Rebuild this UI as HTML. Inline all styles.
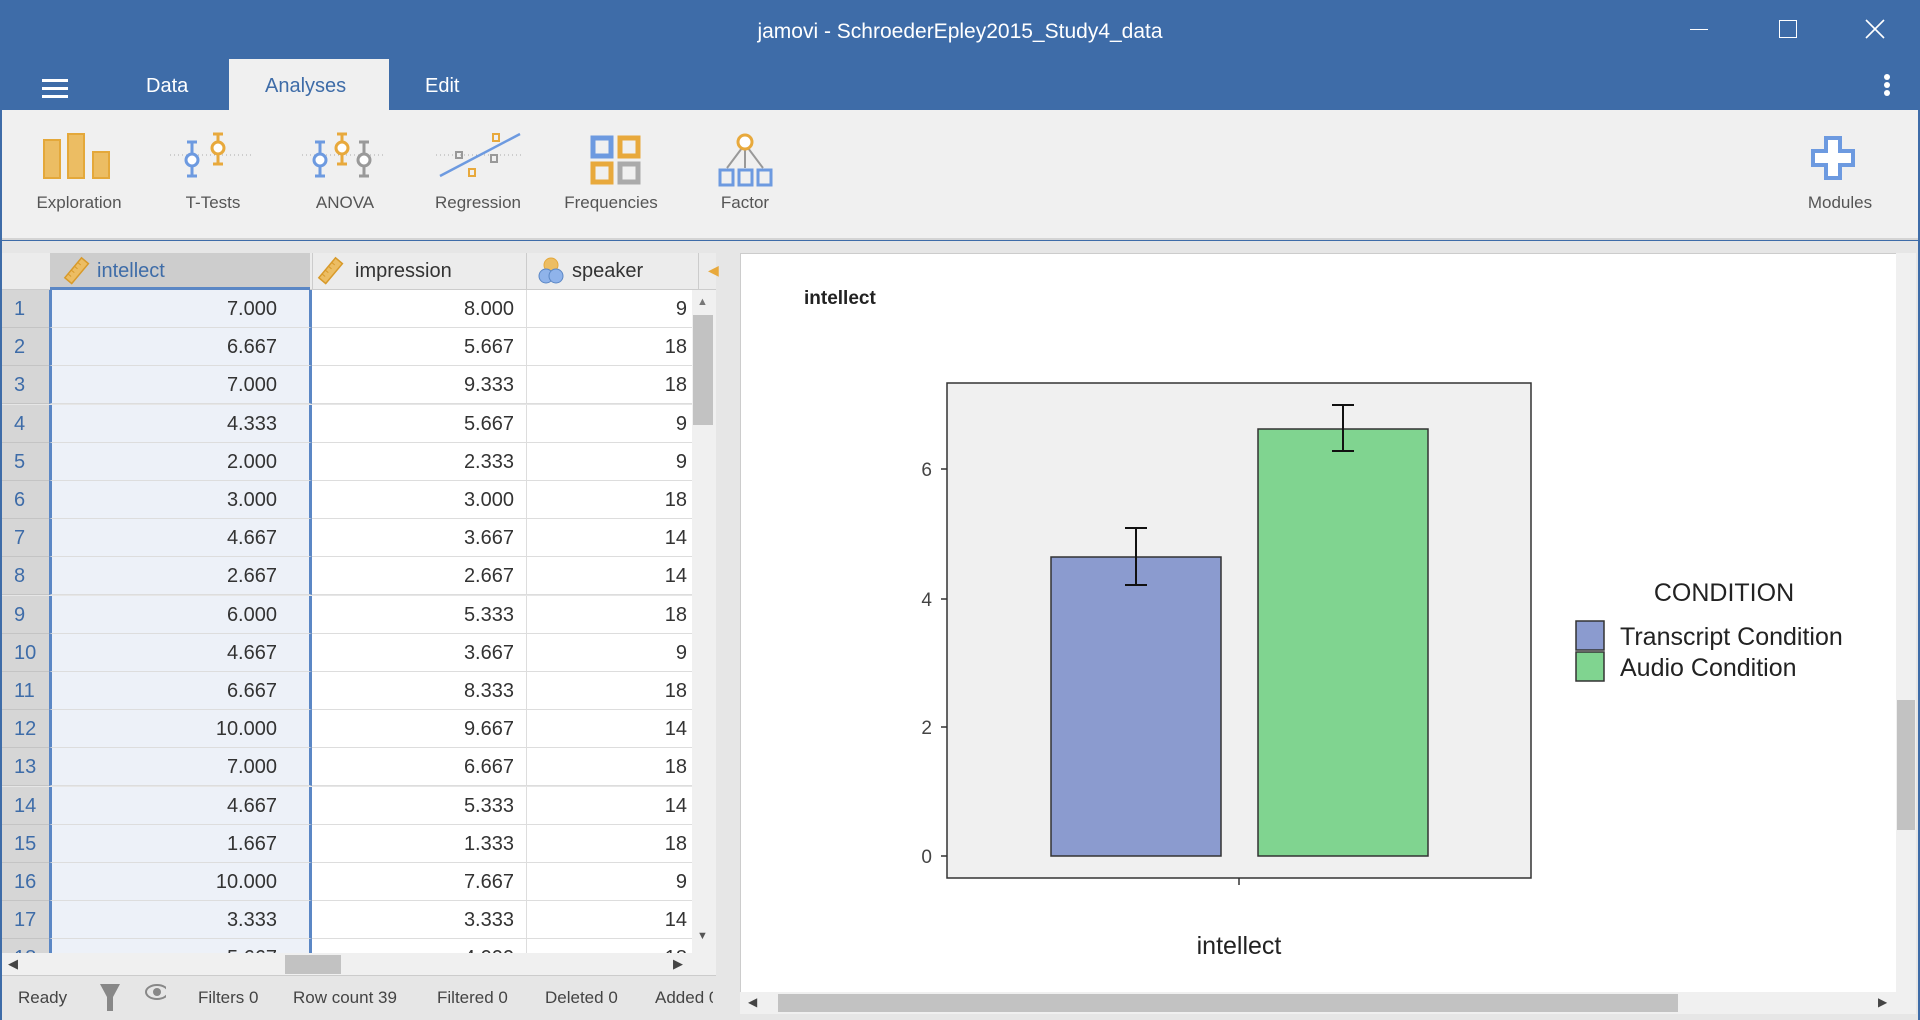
<!DOCTYPE html>
<html><head><meta charset="utf-8"><style>
*{margin:0;padding:0;box-sizing:border-box}
body{width:1920px;height:1020px;overflow:hidden;background:#3e6ca8;font-family:"Liberation Sans",sans-serif;position:relative}
.a{position:absolute}
.t{color:#fff}
.rib{left:2px;top:110px;width:1916px;height:130px;background:#f0f0f0;border-bottom:2px solid #d4d4d4}
.lbl{position:absolute;top:193px;font-size:17px;color:#555;text-align:center;width:140px}
.main{left:2px;top:241px;width:1916px;height:779px;background:#e6e6e6}
.row{position:absolute;left:2px;height:38px;width:690px;font-size:20px;color:#333}
.row div{position:absolute;top:0;height:38px;line-height:38px;border-bottom:1px solid #ddd}
.rn{left:0;width:47px;background:#d6d6d6;color:#3e6ca8;padding-left:12px;border-bottom-color:#c4c4c4!important}
.c1{left:47px;width:263px;background:#edf1f8;text-align:right;padding-right:32px;border-left:3px solid #5b87c5;border-right:3px solid #5b87c5}
.c2{left:310px;width:215px;background:#fff;text-align:right;padding-right:12px;border-right:1px solid #ddd}
.c3{left:525px;width:165px;background:#fff;text-align:right;padding-right:5px}
.st{position:absolute;top:988px;font-size:17px;color:#444}
</style></head><body>
<div class="a t" style="left:0;width:1920px;top:20px;text-align:center;font-size:21px">jamovi - SchroederEpley2015_Study4_data</div>
<div class="a" style="left:1690px;top:29px;width:18px;height:1px;background:#fff"></div>
<div class="a" style="left:1779px;top:20px;width:18px;height:18px;border:1.5px solid #fff"></div>
<svg class="a" style="left:1865px;top:19px" width="20" height="20"><path d="M1 1L19 19M19 1L1 19" stroke="#fff" stroke-width="1.6"/></svg>
<div class="a" style="left:42px;top:79px;width:26px;height:3px;background:#fff;box-shadow:0 8px #fff,0 16px #fff"></div>
<div class="a t" style="left:146px;top:75px;font-size:20px">Data</div>
<div class="a" style="left:229px;top:59px;width:160px;height:52px;background:#f0f0f0"></div>
<div class="a" style="left:265px;top:75px;font-size:20px;color:#3e6ca8">Analyses</div>
<div class="a t" style="left:425px;top:75px;font-size:20px">Edit</div>
<div class="a" style="left:1884px;top:74px;width:6px;height:6px;border-radius:3px;background:#fff;box-shadow:0 8px #fff,0 16px #fff"></div>
<div class="a rib"></div>
<svg class="a" style="left:0;top:110px" width="1920" height="80">
<g fill="#ecbd63" stroke="#e4a83a" stroke-width="2"><rect x="44" y="30" width="16" height="38"/><rect x="68" y="24" width="16" height="44"/><rect x="93" y="42" width="16" height="26"/></g>
<g stroke="#aaa" stroke-dasharray="1 3"><line x1="170" y1="45" x2="252" y2="45"/><line x1="302" y1="45" x2="384" y2="45"/><line x1="436" y1="45" x2="522" y2="45"/></g>
<g fill="none" stroke-width="3"><path d="M192 32v34M187 32h10M187 66h10" stroke="#6d9ae0"/><circle cx="192" cy="50" r="6" fill="#fff" stroke="#6d9ae0"/>
<path d="M218 24v30M213 24h10M213 54h10" stroke="#e8a93c"/><circle cx="218" cy="38" r="6" fill="#fff" stroke="#e8a93c"/>
<path d="M320 32v34M315 32h10M315 66h10" stroke="#6d9ae0"/><circle cx="320" cy="50" r="6" fill="#fff" stroke="#6d9ae0"/>
<path d="M342 24v30M337 24h10M337 54h10" stroke="#e8a93c"/><circle cx="342" cy="38" r="6" fill="#fff" stroke="#e8a93c"/>
<path d="M364 32v34M359 32h10M359 66h10" stroke="#999"/><circle cx="364" cy="50" r="6" fill="#fff" stroke="#999"/>
<line x1="440" y1="66" x2="520" y2="24" stroke="#6d9ae0" stroke-width="2.5"/>
<rect x="456" y="42" width="6" height="6" stroke="#999" stroke-width="2"/><rect x="491" y="45" width="6" height="7" stroke="#999" stroke-width="2"/><rect x="493" y="24" width="6" height="7" stroke="#e8a93c" stroke-width="2"/><rect x="469" y="59" width="6" height="7" stroke="#e8a93c" stroke-width="2"/>
<rect x="593" y="28" width="18" height="18" stroke="#6d9ae0" stroke-width="5"/><rect x="620" y="28" width="18" height="18" stroke="#e8a93c" stroke-width="5"/><rect x="593" y="54" width="18" height="18" stroke="#e8a93c" stroke-width="5"/><rect x="620" y="54" width="18" height="18" stroke="#aaa" stroke-width="5"/>
<path d="M745 34l-18 24M745 34v24M745 34l18 24" stroke="#999" stroke-width="2"/><circle cx="745" cy="32" r="7" fill="#fff" stroke="#e8a93c"/>
<g stroke="#6d9ae0"><rect x="720" y="60" width="13" height="15"/><rect x="739" y="60" width="13" height="15"/><rect x="758" y="60" width="13" height="15"/></g>
<path d="M1826 28h14v13h13v14h-13v13h-14v-13h-13v-14h13z" fill="#fff" stroke="#6d9ae0" stroke-width="4"/></g>
</svg>
<div class="lbl" style="left:9px">Exploration</div><div class="lbl" style="left:143px">T-Tests</div><div class="lbl" style="left:275px">ANOVA</div><div class="lbl" style="left:408px">Regression</div><div class="lbl" style="left:541px">Frequencies</div><div class="lbl" style="left:675px">Factor</div><div class="lbl" style="left:1770px">Modules</div>
<div class="a main"></div>
<div class="a" style="left:2px;top:253px;width:714px;height:37px;background:#ececec;border-bottom:1px solid #ccc"></div>
<div class="a" style="left:50px;top:253px;width:260px;height:37px;background:#cdcdcd;border-bottom:3px solid #5b87c5"></div>
<svg class="a" style="left:62px;top:256px" width="30" height="30"><g transform="rotate(-50 15 15)"><rect x="2" y="10" width="26" height="9" fill="#ecbd63" stroke="#d89a2a" stroke-width="1.5"/><path d="M7 10v4M12 10v4M17 10v4M22 10v4" stroke="#d89a2a"/></g></svg>
<div class="a" style="left:97px;top:260px;font-size:20px;color:#3e6ca8">intellect</div>
<svg class="a" style="left:316px;top:256px" width="30" height="30"><g transform="rotate(-50 15 15)"><rect x="2" y="10" width="26" height="9" fill="#ecbd63" stroke="#d89a2a" stroke-width="1.5"/><path d="M7 10v4M12 10v4M17 10v4M22 10v4" stroke="#d89a2a"/></g></svg>
<div class="a" style="left:355px;top:260px;font-size:20px;color:#333">impression</div>
<div class="a" style="left:312px;top:253px;width:1px;height:37px;background:#ccc"></div><div class="a" style="left:526px;top:253px;width:1px;height:37px;background:#ccc"></div><div class="a" style="left:698px;top:253px;width:1px;height:37px;background:#ccc"></div>
<svg class="a" style="left:537px;top:256px" width="28" height="30"><circle cx="14" cy="9" r="7" fill="#ecbd63" stroke="#e4a83a"/><circle cx="9" cy="20" r="7" fill="#8fb3ea" stroke="#5b87c5"/><circle cx="19" cy="20" r="7" fill="#8fb3ea" stroke="#5b87c5"/></svg>
<div class="a" style="left:572px;top:260px;font-size:20px;color:#333">speaker</div>
<div class="a" style="left:708px;top:262px;font-size:14px;color:#e8a93c">◀</div>
<div class="a" style="left:0;top:290px;width:716px;height:663px;overflow:hidden">
<div class="row" style="top:0"><div class="rn">1</div><div class="c1">7.000</div><div class="c2">8.000</div><div class="c3">9</div></div>
<div class="row" style="top:38px"><div class="rn">2</div><div class="c1">6.667</div><div class="c2">5.667</div><div class="c3">18</div></div>
<div class="row" style="top:76px"><div class="rn">3</div><div class="c1">7.000</div><div class="c2">9.333</div><div class="c3">18</div></div>
<div class="row" style="top:115px"><div class="rn">4</div><div class="c1">4.333</div><div class="c2">5.667</div><div class="c3">9</div></div>
<div class="row" style="top:153px"><div class="rn">5</div><div class="c1">2.000</div><div class="c2">2.333</div><div class="c3">9</div></div>
<div class="row" style="top:191px"><div class="rn">6</div><div class="c1">3.000</div><div class="c2">3.000</div><div class="c3">18</div></div>
<div class="row" style="top:229px"><div class="rn">7</div><div class="c1">4.667</div><div class="c2">3.667</div><div class="c3">14</div></div>
<div class="row" style="top:267px"><div class="rn">8</div><div class="c1">2.667</div><div class="c2">2.667</div><div class="c3">14</div></div>
<div class="row" style="top:306px"><div class="rn">9</div><div class="c1">6.000</div><div class="c2">5.333</div><div class="c3">18</div></div>
<div class="row" style="top:344px"><div class="rn">10</div><div class="c1">4.667</div><div class="c2">3.667</div><div class="c3">9</div></div>
<div class="row" style="top:382px"><div class="rn">11</div><div class="c1">6.667</div><div class="c2">8.333</div><div class="c3">18</div></div>
<div class="row" style="top:420px"><div class="rn">12</div><div class="c1">10.000</div><div class="c2">9.667</div><div class="c3">14</div></div>
<div class="row" style="top:458px"><div class="rn">13</div><div class="c1">7.000</div><div class="c2">6.667</div><div class="c3">18</div></div>
<div class="row" style="top:497px"><div class="rn">14</div><div class="c1">4.667</div><div class="c2">5.333</div><div class="c3">14</div></div>
<div class="row" style="top:535px"><div class="rn">15</div><div class="c1">1.667</div><div class="c2">1.333</div><div class="c3">18</div></div>
<div class="row" style="top:573px"><div class="rn">16</div><div class="c1">10.000</div><div class="c2">7.667</div><div class="c3">9</div></div>
<div class="row" style="top:611px"><div class="rn">17</div><div class="c1">3.333</div><div class="c2">3.333</div><div class="c3">14</div></div>
<div class="row" style="top:649px"><div class="rn">18</div><div class="c1">5.667</div><div class="c2">4.000</div><div class="c3">18</div></div>
<div class="a" style="left:692px;top:0;width:24px;height:663px;background:#f0f0f0"></div>
<div class="a" style="left:693px;top:25px;width:20px;height:110px;background:#c2c2c2"></div>
<div class="a" style="left:697px;top:6px;font-size:11px;color:#777">▲</div><div class="a" style="left:697px;top:640px;font-size:11px;color:#555">▼</div>
</div>
<div class="a" style="left:2px;top:953px;width:714px;height:23px;background:#f0f0f0;border-bottom:1px solid #ccc"></div>
<div class="a" style="left:285px;top:955px;width:56px;height:19px;background:#c2c2c2"></div>
<div class="a" style="left:8px;top:956px;font-size:13px;color:#444">◀</div><div class="a" style="left:673px;top:956px;font-size:13px;color:#444">▶</div>
<div class="st" style="left:18px">Ready</div>
<svg class="a" style="left:98px;top:982px" width="68" height="30"><path d="M2 2h20l-7 13v14h-6v-14z" fill="#888"/><ellipse cx="59" cy="10" rx="11" ry="7" fill="none" stroke="#888" stroke-width="2"/><circle cx="59" cy="10" r="4" fill="#888"/></svg>
<div class="st" style="left:198px">Filters 0</div><div class="st" style="left:293px">Row count 39</div><div class="st" style="left:437px">Filtered 0</div><div class="st" style="left:545px">Deleted 0</div><div class="st" style="left:655px;width:58px;overflow:hidden;white-space:nowrap">Added 0</div>
<div class="a" style="left:740px;top:253px;width:1156px;height:739px;background:#fff;border-left:1px solid #ccc;border-top:1px solid #ccc"></div>
<div class="a" style="left:1896px;top:253px;width:20px;height:739px;background:#f0f0f0"></div>
<div class="a" style="left:1897px;top:700px;width:18px;height:130px;background:#c2c2c2"></div>
<div class="a" style="left:740px;top:992px;width:1176px;height:22px;background:#f0f0f0"></div>
<div class="a" style="left:778px;top:994px;width:900px;height:18px;background:#c2c2c2"></div>
<div class="a" style="left:748px;top:995px;font-size:12px;color:#444">◀</div><div class="a" style="left:1878px;top:995px;font-size:12px;color:#444">▶</div>
<div class="a" style="left:804px;top:288px;font-size:19px;font-weight:bold;color:#222">intellect</div>
<svg class="a" style="left:0;top:0" width="1920" height="1020" font-family="Liberation Sans,sans-serif">
<rect x="947" y="383" width="584" height="495" fill="#f0f0f0" stroke="#333" stroke-width="1.5"/>
<g stroke="#333" stroke-width="1.5"><line x1="941" y1="469" x2="947" y2="469"/><line x1="941" y1="599" x2="947" y2="599"/><line x1="941" y1="727" x2="947" y2="727"/><line x1="941" y1="856" x2="947" y2="856"/><line x1="1239" y1="878" x2="1239" y2="885"/></g>
<g font-size="19" fill="#444" text-anchor="end"><text x="932" y="476">6</text><text x="932" y="606">4</text><text x="932" y="734">2</text><text x="932" y="863">0</text></g>
<rect x="1051" y="557" width="170" height="299" fill="#8b9bcf" stroke="#333" stroke-width="1.5"/>
<rect x="1258" y="429" width="170" height="427" fill="#80d490" stroke="#333" stroke-width="1.5"/>
<g stroke="#111" stroke-width="2"><path d="M1136 528v57M1125 528h22M1125 585h22"/><path d="M1343 405v46M1332 405h22M1332 451h22"/></g>
<text x="1239" y="954" font-size="25" fill="#222" text-anchor="middle">intellect</text>
<text x="1724" y="601" font-size="25" fill="#222" text-anchor="middle">CONDITION</text>
<rect x="1576" y="621" width="28" height="29" fill="#8b9bcf" stroke="#333" stroke-width="1.5"/>
<rect x="1576" y="652" width="28" height="29" fill="#80d490" stroke="#333" stroke-width="1.5"/>
<text x="1620" y="645" font-size="25" fill="#222">Transcript Condition</text>
<text x="1620" y="676" font-size="25" fill="#222">Audio Condition</text>
</svg>
</body></html>
